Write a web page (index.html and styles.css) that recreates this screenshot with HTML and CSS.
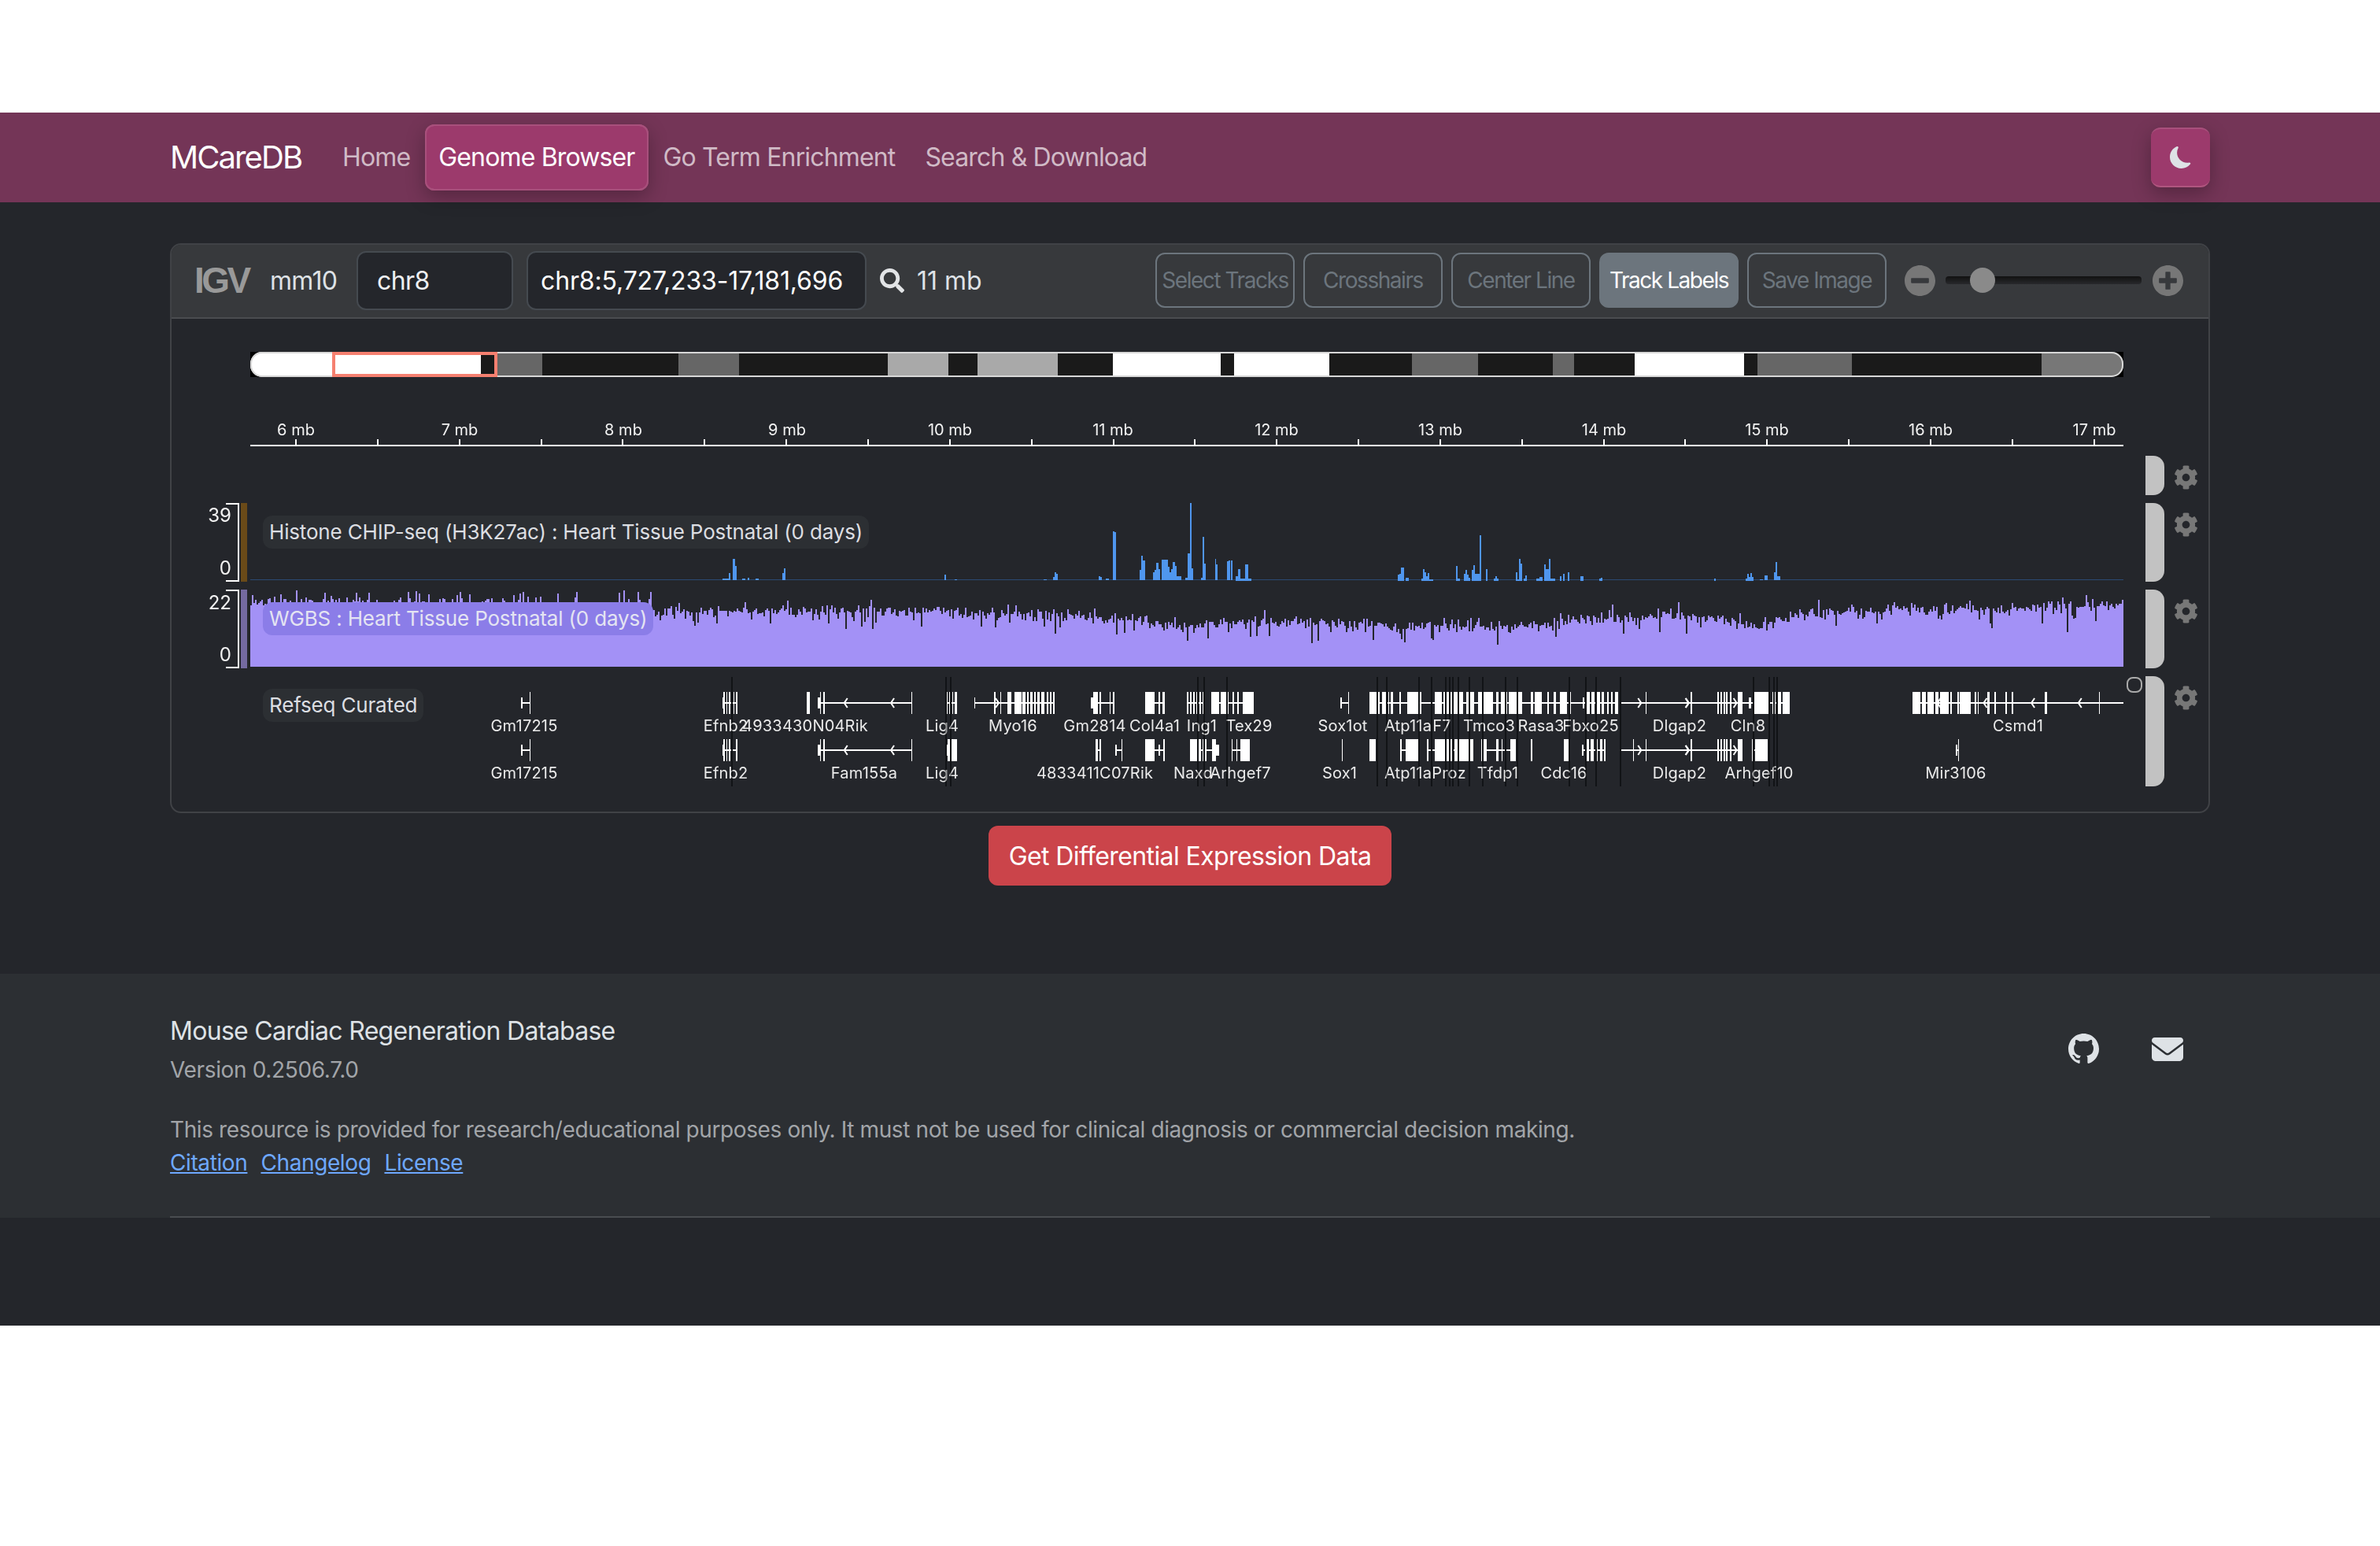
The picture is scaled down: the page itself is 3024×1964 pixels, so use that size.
FILE: index.html
```html
<!DOCTYPE html>
<html lang="en">
<head>
<meta charset="utf-8">
<title>MCareDB</title>
<link rel="stylesheet" href="styles.css">
</head>
<body>
<svg class="sprite" aria-hidden="true"><symbol id="cog" viewBox="0 0 512 512"><path d="M487.4 315.7l-42.6-24.6c4.3-23.2 4.3-47 0-70.2l42.6-24.6c4.9-2.8 7.1-8.6 5.5-14-11.1-35.6-30-67.8-54.7-94.6-3.8-4.1-10-5.1-14.8-2.3L380.8 110c-17.9-15.4-38.5-27.3-60.8-35.1V25.8c0-5.6-3.9-10.5-9.4-11.7-36.7-8.2-74.3-7.8-109.2 0-5.5 1.2-9.4 6.1-9.4 11.7V75c-22.2 7.9-42.8 19.8-60.8 35.1L88.7 85.5c-4.9-2.8-11-1.9-14.8 2.3-24.7 26.7-43.6 58.9-54.7 94.6-1.7 5.4.6 11.2 5.5 14L67.3 221c-4.3 23.2-4.3 47 0 70.2l-42.6 24.6c-4.9 2.8-7.1 8.6-5.5 14 11.1 35.6 30 67.8 54.7 94.6 3.8 4.1 10 5.1 14.8 2.3l42.6-24.6c17.9 15.4 38.5 27.3 60.8 35.1v49.2c0 5.6 3.9 10.5 9.4 11.7 36.7 8.2 74.3 7.8 109.2 0 5.5-1.2 9.4-6.1 9.4-11.7v-49.2c22.2-7.9 42.8-19.8 60.8-35.1l42.6 24.6c4.9 2.8 11 1.9 14.8-2.3 24.7-26.7 43.6-58.9 54.7-94.6 1.5-5.5-.7-11.3-5.6-14.1zM256 336c-44.1 0-80-35.9-80-80s35.9-80 80-80 80 35.9 80 80-35.9 80-80 80z"/></symbol></svg>
<div class="app">
  <nav class="navbar">
    <a class="brand">MCareDB</a>
    <a class="nav-link">Home</a>
    <a class="nav-link active">Genome Browser</a>
    <a class="nav-link">Go Term Enrichment</a>
    <a class="nav-link">Search &amp; Download</a>
    <button class="theme-btn" aria-label="Toggle theme">
      <svg viewBox="0 0 16 16" class="moon"><path d="M6 .278a.77.77 0 0 1 .08.858 7.2 7.2 0 0 0-.878 3.46c0 4.021 3.278 7.277 7.318 7.277q.792-.001 1.533-.16a.79.79 0 0 1 .81.316.73.73 0 0 1-.031.893A8.35 8.35 0 0 1 8.344 16C3.734 16 0 12.286 0 7.71 0 4.266 2.114 1.312 5.124.06A.75.75 0 0 1 6 .278"/></svg>
    </button>
  </nav>

  <section class="igv-card">
    <header class="igv-head">
      <span class="igv-logo">IGV</span>
      <span class="genome">mm10</span>
      <div class="field chrom">chr8</div>
      <div class="field locus">chr8:5,727,233-17,181,696</div>
      <svg class="search" viewBox="0 0 512 512"><path d="M505 442.7L405.3 343c-4.5-4.5-10.6-7-17-7H372c27.6-35.3 44-79.7 44-128C416 93.1 322.9 0 208 0S0 93.1 0 208s93.1 208 208 208c48.3 0 92.7-16.4 128-44v16.3c0 6.4 2.5 12.5 7 17l99.7 99.7c9.4 9.4 24.6 9.4 33.9 0l28.3-28.3c9.4-9.4 9.4-24.6.1-34zM208 336c-70.7 0-128-57.2-128-128 0-70.7 57.2-128 128-128 70.7 0 128 57.2 128 128 0 70.7-57.2 128-128 128z"/></svg>
      <span class="span-size">11 mb</span>
      <div class="tools">
        <button class="tool">Select Tracks</button>
        <button class="tool">Crosshairs</button>
        <button class="tool">Center Line</button>
        <button class="tool on">Track Labels</button>
        <button class="tool">Save Image</button>
      </div>
      <svg class="zoom-icon zoom-out" viewBox="8 8 496 496"><path d="M256 8C119 8 8 119 8 256s111 248 248 248 248-111 248-248S393 8 256 8zM124 296c-6.6 0-12-5.4-12-12v-56c0-6.6 5.4-12 12-12h264c6.6 0 12 5.4 12 12v56c0 6.6-5.4 12-12 12H124z"/></svg>
      <div class="slider"><span class="thumb"></span></div>
      <svg class="zoom-icon zoom-in" viewBox="8 8 496 496"><path d="M256 8C119 8 8 119 8 256s111 248 248 248 248-111 248-248S393 8 256 8zm144 276c0 6.6-5.4 12-12 12h-92v92c0 6.6-5.4 12-12 12h-56c-6.6 0-12-5.4-12-12v-92h-92c-6.6 0-12-5.4-12-12v-56c0-6.6 5.4-12 12-12h92v-92c0-6.6 5.4-12 12-12h56c6.6 0 12 5.4 12 12v92h92c6.6 0 12 5.4 12 12v56z"/></svg>
    </header>

    <div class="igv-body">
      <canvas id="tracks" class="layer" width="2585" height="626"></canvas>

      <span class="tick-label" style="left:157px">6 mb</span>
      <span class="tick-label" style="left:365px">7 mb</span>
      <span class="tick-label" style="left:573px">8 mb</span>
      <span class="tick-label" style="left:781px">9 mb</span>
      <span class="tick-label" style="left:988px">10 mb</span>
      <span class="tick-label" style="left:1195px">11 mb</span>
      <span class="tick-label" style="left:1403px">12 mb</span>
      <span class="tick-label" style="left:1611px">13 mb</span>
      <span class="tick-label" style="left:1819px">14 mb</span>
      <span class="tick-label" style="left:2026px">15 mb</span>
      <span class="tick-label" style="left:2234px">16 mb</span>
      <span class="tick-label" style="left:2442px">17 mb</span>

      <span class="axis axis-a-max">39</span>
      <span class="axis axis-a-min">0</span>
      <span class="bracket bracket-a"></span>
      <span class="color-bar bar-a"></span>
      <span class="axis axis-b-max">22</span>
      <span class="axis axis-b-min">0</span>
      <span class="bracket bracket-b"></span>
      <span class="color-bar bar-b"></span>

      <span class="chip chip-a">Histone CHIP-seq (H3K27ac) : Heart Tissue Postnatal (0 days)</span>
      <span class="chip chip-b">WGBS : Heart Tissue Postnatal (0 days)</span>
      <span class="chip chip-c">Refseq Curated</span>

      <span class="gene r1" style="left:447px">Gm17215</span>
      <span class="gene r1" style="left:703px">Efnb2</span>
      <span class="gene r1" style="left:804px">4933430N04Rik</span>
      <span class="gene r1" style="left:978px">Lig4</span>
      <span class="gene r1" style="left:1068px">Myo16</span>
      <span class="gene r1" style="left:1172px">Gm2814</span>
      <span class="gene r1" style="left:1248px">Col4a1</span>
      <span class="gene r1" style="left:1308px">Ing1</span>
      <span class="gene r1" style="left:1368px">Tex29</span>
      <span class="gene r1" style="left:1487px">Sox1ot</span>
      <span class="gene r1" style="left:1570px">Atp11a</span>
      <span class="gene r1" style="left:1613px">F7</span>
      <span class="gene r1" style="left:1673px">Tmco3</span>
      <span class="gene r1" style="left:1739px">Rasa3</span>
      <span class="gene r1" style="left:1802px">Fbxo25</span>
      <span class="gene r1" style="left:1915px">Dlgap2</span>
      <span class="gene r1" style="left:2002px">Cln8</span>
      <span class="gene r1" style="left:2345px">Csmd1</span>

      <span class="gene r2" style="left:447px">Gm17215</span>
      <span class="gene r2" style="left:703px">Efnb2</span>
      <span class="gene r2" style="left:879px">Fam155a</span>
      <span class="gene r2" style="left:978px">Lig4</span>
      <span class="gene r2" style="left:1172px">4833411C07Rik</span>
      <span class="gene r2" style="left:1297px">Naxd</span>
      <span class="gene r2" style="left:1357px">Arhgef7</span>
      <span class="gene r2" style="left:1483px">Sox1</span>
      <span class="gene r2" style="left:1570px">Atp11a</span>
      <span class="gene r2" style="left:1622px">Proz</span>
      <span class="gene r2" style="left:1684px">Tfdp1</span>
      <span class="gene r2" style="left:1768px">Cdc16</span>
      <span class="gene r2" style="left:1915px">Dlgap2</span>
      <span class="gene r2" style="left:2016px">Arhgef10</span>
      <span class="gene r2" style="left:2266px">Mir3106</span>

      <canvas id="gaps" class="layer" width="2585" height="626"></canvas>

      <span class="handle h-ruler"></span>
      <span class="handle h-a"></span>
      <span class="handle h-b"></span>
      <span class="handle h-c"></span>
      <svg class="gear g-ruler"><use href="#cog"/></svg>
      <svg class="gear g-a"><use href="#cog"/></svg>
      <svg class="gear g-b"><use href="#cog"/></svg>
      <svg class="gear g-c"><use href="#cog"/></svg>
      <span class="scroll-dot"></span>
    </div>
  </section>

  <div class="action"><button class="btn-danger">Get Differential Expression Data</button></div>

  <footer class="footer">
    <div class="footer-inner">
      <div class="footer-row">
        <div>
          <div class="foot-title">Mouse Cardiac Regeneration Database</div>
          <div class="foot-version">Version 0.2506.7.0</div>
        </div>
        <div class="foot-icons">
          <svg class="gh" viewBox="0 0 16 16"><path d="M8 0C3.58 0 0 3.58 0 8c0 3.54 2.29 6.53 5.47 7.59.4.07.55-.17.55-.38 0-.19-.01-.82-.01-1.49-2.01.37-2.53-.49-2.69-.94-.09-.23-.48-.94-.82-1.13-.28-.15-.68-.52-.01-.53.63-.01 1.08.58 1.23.82.72 1.21 1.87.87 2.33.66.07-.52.28-.87.51-1.07-1.78-.2-3.64-.89-3.64-3.95 0-.87.31-1.59.82-2.15-.08-.2-.36-1.02.08-2.12 0 0 .67-.21 2.2.82.64-.18 1.32-.27 2-.27s1.36.09 2 .27c1.53-1.04 2.2-.82 2.2-.82.44 1.1.16 1.92.08 2.12.51.56.82 1.27.82 2.15 0 3.07-1.87 3.75-3.65 3.95.29.25.54.73.54 1.48 0 1.07-.01 1.93-.01 2.2 0 .21.15.46.55.38A8.01 8.01 0 0 0 16 8c0-4.42-3.58-8-8-8"/></svg>
          <svg class="mail" viewBox="0 64 512 384"><path d="M48 64C21.5 64 0 85.5 0 112c0 15.1 7.1 29.3 19.2 38.4L236.8 313.6c11.4 8.5 27 8.5 38.4 0L492.8 150.4c12.1-9.1 19.2-23.3 19.2-38.4c0-26.5-21.5-48-48-48H48zM0 176V384c0 35.3 28.7 64 64 64H448c35.3 0 64-28.7 64-64V176L294.4 339.2c-22.8 17.1-54 17.1-76.8 0L0 176z"/></svg>
        </div>
      </div>
      <p class="foot-note">This resource is provided for research/educational purposes only. It must not be used for clinical diagnosis or commercial decision making.</p>
      <div class="foot-links"><a>Citation</a><a>Changelog</a><a>License</a></div>
      <hr class="foot-rule">
    </div>
  </footer>
</div>
<script src="script.js"></script>
</body>
</html>
```
FILE: styles.css
```css
* { box-sizing: border-box; }
html, body { margin: 0; background: #fff; }
body { padding-top: 143px; font-family: Inter, "Liberation Sans", sans-serif; }
.sprite { display: none; }
.app { background: #24262b; color: #dee2e6; padding-bottom: 137px; }

.navbar { position: relative; z-index: 2; display: flex; align-items: center; height: 114px; padding: 0 216px; background: #743557; }
.brand { width: 168px; margin-right: 32px; padding-bottom: 2px; font-size: 40px; letter-spacing: -1.9px; color: #fff; white-space: nowrap; }
.nav-link { display: flex; align-items: center; height: 84px; padding: 0 19px 2px; border: 2px solid transparent; border-width: 2px 0; font-size: 32px; letter-spacing: -0.85px; color: #d0bac6; white-space: nowrap; }
.nav-link.active { padding: 0 17px 2px; color: #fff; background: #9c3a6c; border-color: #ae5480; border-radius: 12px; box-shadow: 0 8px 24px rgba(0, 0, 0, .28); outline: 2px solid #a8507c; outline-offset: -2px; }
.theme-btn { margin-left: auto; width: 75px; height: 76px; padding: 0; display: flex; align-items: center; justify-content: center; background: #9c3a6c; border: 0; border-bottom: 2px solid #b0567f; border-top: 2px solid #a8507c; border-radius: 12px; box-shadow: 0 8px 24px rgba(0, 0, 0, .28); }
.moon { width: 28px; height: 28px; fill: #dee2e6; }

.igv-card { width: 2592px; height: 724px; margin: 52px 0 0 216px; border: 2px solid #404246; border-radius: 14px; overflow: hidden; }
.igv-head { display: flex; align-items: center; height: 94px; padding: 0 32px 2px 29px; background: #37393c; border-bottom: 2px solid #4a4c50; }
.igv-logo { width: 70px; margin-right: 26px; font-family: "Liberation Sans", sans-serif; font-weight: 700; font-size: 46px; letter-spacing: -3.5px; color: #999; line-height: 1; white-space: nowrap; }
.genome { width: 85px; margin-right: 25px; font-size: 32px; letter-spacing: -0.7px; color: #dee2e6; }
.field { display: flex; align-items: center; height: 75px; background: #24262b; border: 2px solid #454a50; border-radius: 12px; font-size: 32px; letter-spacing: -0.6px; color: #eef0f2; white-space: nowrap; }
.chrom { width: 199px; margin-right: 17px; padding-left: 24px; }
.locus { width: 432px; margin-right: 16px; padding-left: 16px; letter-spacing: -0.14px; color: #fff; }
.search { width: 33px; height: 31px; margin-right: 15px; fill: #e2e4e6; }
.span-size { font-size: 32px; letter-spacing: 0; color: #dee2e6; white-space: nowrap; }
.tools { display: flex; gap: 11px; margin-left: auto; margin-right: 23px; }
.tool { width: 177px; height: 70px; padding: 0; background: transparent; border: 2px solid #6c757d; border-radius: 12px; font: 28px Inter, "Liberation Sans", sans-serif; letter-spacing: -1.45px; color: #6c757d; white-space: nowrap; }
.tool.on { background: #6c757d; color: #fff; }
.zoom-icon { width: 39px; height: 39px; fill: #777; flex: none; }
.zoom-out { margin-right: 13px; }
.zoom-in { margin-left: 14px; }
.slider { position: relative; width: 249px; height: 10px; border-radius: 4px; background: linear-gradient(#111, #28292c); }
.thumb { position: absolute; left: 31px; top: -11px; width: 32px; height: 32px; border-radius: 50%; background: #8a8a8a; }

.igv-body { position: relative; height: 626px; margin-left: 1px; }
.layer { position: absolute; left: 0; top: 0; pointer-events: none; }
.tick-label { position: absolute; top: 129px; transform: translateX(-50%); font-size: 20px; line-height: 24px; color: #f2f2f2; white-space: nowrap; }
.gene { position: absolute; transform: translateX(-50%); font-size: 20px; line-height: 24px; letter-spacing: .2px; color: #eaeaea; white-space: nowrap; }
.r1 { top: 505px; }
.r2 { top: 565px; }
.axis { position: absolute; left: 25px; width: 50px; text-align: right; font-size: 24px; line-height: 30px; color: #f2f2f2; }
.axis-a-max { top: 235px; }
.axis-a-min { top: 302px; }
.axis-b-max { top: 346px; }
.axis-b-min { top: 412px; }
.bracket { position: absolute; left: 68px; width: 17px; height: 100px; border: 2px solid #fff; border-left: 0; }
.bracket-a { top: 234px; }
.bracket-b { top: 344px; }
.color-bar { position: absolute; left: 87px; width: 8px; height: 100px; }
.bar-a { top: 234px; background: #6a4a18; }
.bar-b { top: 344px; background: #746aa0; }
.chip { position: absolute; left: 115px; height: 42px; padding: 0 8px; border-radius: 12px; font-size: 26px; line-height: 42px; letter-spacing: -.17px; color: #dcdee2; background: #2c2f33; white-space: nowrap; }
.chip-a { top: 250px; }
.chip-b { top: 360px; background: #8b7de8; color: #e4e4f2; }
.chip-c { top: 470px; }
.handle { position: absolute; left: 2507px; width: 24px; background: #c2c2c2; border-radius: 0 14px 14px 0; }
.h-ruler { top: 174px; height: 50px; }
.h-a { top: 234px; height: 100px; }
.h-b { top: 344px; height: 100px; }
.h-c { top: 454px; height: 140px; }
.gear { position: absolute; left: 2543px; width: 31px; height: 31px; fill: #777; }
.g-ruler { top: 186px; }
.g-a { top: 246px; }
.g-b { top: 356px; }
.g-c { top: 466px; }
.scroll-dot { position: absolute; left: 2483px; top: 455px; width: 20px; height: 20px; border: 2px solid #aaa; border-radius: 8px; }

.action { display: flex; justify-content: center; margin-top: 16px; }
.btn-danger { width: 512px; height: 76px; padding: 0; background: #cb444a; border: 0; border-radius: 12px; font: 32px Inter, "Liberation Sans", sans-serif; letter-spacing: -0.6px; color: #fff; white-space: nowrap; }

.footer { margin-top: 112px; background: #2c2f33; }
.footer-inner { margin: 0 216px; padding-top: 49px; }
.footer-row { display: flex; justify-content: space-between; align-items: flex-start; }
.foot-title { font-size: 32px; line-height: 48px; letter-spacing: -0.7px; color: #dee2e6; }
.foot-version { margin-top: 4px; font-size: 28px; line-height: 42px; letter-spacing: -0.35px; color: #a2a5a9; }
.foot-icons { display: flex; align-items: center; gap: 67px; margin-top: 27px; padding-right: 34px; }
.gh { width: 39px; height: 39px; fill: #dee2e6; }
.mail { width: 40px; height: 30px; fill: #dee2e6; }
.foot-note { margin: 34px 0 0; font-size: 28px; line-height: 42px; letter-spacing: -0.39px; color: #a2a5a9; white-space: nowrap; }
.foot-links { display: flex; gap: 17px; font-size: 28px; line-height: 42px; letter-spacing: -0.39px; }
.foot-links a { color: #6ea8fe; text-decoration: underline; }
.foot-rule { height: 2px; margin: 47px 0 0; border: 0; background: #4a4d51; }
```
FILE: script.js
```js
(function () {
  var ctx = document.getElementById('tracks').getContext('2d');
  var over = document.getElementById('gaps').getContext('2d');
  ctx.translate(-219, -405);
  over.translate(-219, -405);

  function rect(c, x0, y, x1, h, color) { c.fillStyle = color; c.fillRect(Math.round(x0), y, Math.max(1, Math.round(x1) - Math.round(x0)), h); }

  /* ideogram */
  var W = '#ffffff', K = '#1a1a1a', G = '#666666', L = '#a9a9a9';
  var bands = [[164, 317, W], [317, 327, K], [327, 357, G], [357, 447, K], [447, 487, G], [487, 585, K], [585, 625, L], [625, 644, K], [644, 697, L], [697, 733, K], [733, 804, W], [804, 813, K], [813, 876, W], [876, 930, K], [930, 974, G], [974, 1023, K], [1023, 1037, G], [1037, 1077, K], [1077, 1149, W], [1149, 1158, K], [1158, 1220, G], [1220, 1345, K], [1345, 1399, '#777777']];
  var S = 3024 / 1568;
  ctx.fillStyle = '#000';
  ctx.fillRect(318, 447, 14, 32);
  ctx.fillRect(2684, 447, 14, 32);
  ctx.save();
  ctx.beginPath();
  ctx.roundRect(318, 447, 2380, 32, 15);
  ctx.clip();
  bands.forEach(function (b) { rect(ctx, b[0] * S, 447, b[1] * S, 32, b[2]); });
  ctx.restore();
  ctx.strokeStyle = '#d8d8d8';
  ctx.lineWidth = 2;
  ctx.beginPath();
  ctx.roundRect(319, 448, 2378, 30, 14);
  ctx.stroke();
  ctx.strokeStyle = '#f58070';
  ctx.lineWidth = 4;
  ctx.strokeRect(424, 449, 206, 28);

  /* ruler */
  rect(ctx, 318, 565, 2698, 2, '#fff');
  for (var t = 0; t < 24; t++) {
    var tx = 375 + t * 103.85;
    if (tx < 2698) rect(ctx, tx, 558, tx + 2, 8, '#fff');
  }

  /* histone peaks: [z0, z1, ztop] in crop coordinates */
  var BLUE = '#4f96ee';
  rect(ctx, 318, 736, 2698, 1, '#2b4a73');
  function peaks(ox, f, oy, zbase, list) {
    list.forEach(function (p) {
      var top = Math.round(oy + p[2] / 3), base = Math.round(oy + zbase / 3) + 1;
      rect(ctx, ox + p[0] / f, top, ox + p[1] / f, base - top, BLUE);
    });
  }
  peaks(880, 2.24, 620, 349, [[85, 103, 346], [103, 107, 325], [115, 120, 270], [120, 125, 297], [140, 150, 346], [157, 161, 342], [180, 188, 344], [255, 259, 325], [259, 264, 305], [716, 721, 330], [745, 752, 348], [1000, 1008, 347], [1026, 1031, 340], [1031, 1035, 320], [1035, 1040, 328], [1155, 1160, 335], [1160, 1165, 340], [1175, 1185, 344], [1196, 1200, 165], [1200, 1205, 168], [1272, 1277, 312], [1277, 1282, 258], [1282, 1287, 276], [1310, 1315, 322], [1315, 1320, 312], [1320, 1325, 284], [1325, 1330, 310], [1335, 1352, 272], [1352, 1357, 300], [1357, 1362, 320], [1362, 1367, 308], [1367, 1372, 282], [1372, 1377, 298], [1377, 1390, 335], [1402, 1410, 342], [1410, 1415, 248], [1415, 1420, 57], [1420, 1424, 305], [1448, 1452, 342], [1452, 1456, 186], [1456, 1460, 288], [1487, 1490, 270], [1490, 1495, 292], [1520, 1525, 280], [1525, 1530, 277], [1532, 1537, 277]]);
  peaks(1570, 2.376, 630, 320, [[0, 8, 305], [8, 14, 280], [14, 29, 315], [29, 38, 260], [38, 48, 316], [489, 495, 300], [495, 499, 297], [499, 508, 274], [513, 523, 312], [561, 565, 315], [565, 570, 278], [570, 575, 290], [575, 579, 305], [579, 584, 294], [584, 596, 318], [665, 670, 267], [670, 678, 316], [689, 694, 296], [694, 699, 281], [699, 703, 300], [703, 708, 312], [713, 717, 283], [717, 722, 265], [722, 736, 298], [736, 741, 151], [755, 760, 280], [779, 784, 314], [784, 789, 306], [789, 794, 314], [846, 851, 290], [851, 855, 318], [855, 860, 241], [860, 865, 257], [870, 874, 316], [874, 879, 304], [907, 917, 315], [917, 927, 309], [931, 936, 262], [936, 946, 280], [946, 951, 241], [951, 965, 315], [979, 984, 306], [988, 993, 296], [1003, 1007, 292], [1041, 1050, 307], [1098, 1103, 316], [1103, 1108, 312], [1444, 1449, 316], [1539, 1544, 316], [1544, 1549, 298], [1549, 1554, 310], [1554, 1558, 294], [1558, 1563, 308]]);
  peaks(2100, 2.178, 560, 529, [[170, 174, 526], [297, 305, 527], [310, 318, 512], [335, 340, 500], [340, 344, 463], [344, 352, 515]]);

  /* WGBS wiggle */
  var seed = 20506;
  function rnd() { seed = (seed + 0x6D2B79F5) | 0; var q = Math.imul(seed ^ (seed >>> 15), 1 | seed); q = (q + Math.imul(q ^ (q >>> 7), 61 | q)) ^ q; return ((q ^ (q >>> 14)) >>> 0) / 4294967296; }
  var env = [[318, 767], [600, 767], [830, 778], [880, 776], [1100, 775], [1250, 780], [1350, 782], [1415, 787], [1505, 796], [1580, 792], [1696, 790], [1801, 798], [1831, 795], [1928, 797], [1991, 790], [2054, 784], [2117, 781], [2180, 785], [2228, 797], [2284, 781], [2350, 778], [2421, 775], [2559, 774], [2640, 770], [2698, 768]];
  function envelope(x) {
    for (var i = 1; i < env.length; i++) if (x <= env[i][0]) {
      var a = env[i - 1], b = env[i];
      return a[1] + (b[1] - a[1]) * (x - a[0]) / (b[0] - a[0]);
    }
    return 768;
  }
  var PURPLE = '#a391f6';
  for (var x = 318; x < 2698; x += 2) {
    var y = envelope(x) + (rnd() + rnd() - 1) * 9;
    var r = rnd();
    if (x < 830) {
      if (r < 0.16) y = 750 + rnd() * 13;
    } else if (r < 0.05) y -= 5 + rnd() * 7;
    else if (r < 0.13) y += 6 + rnd() * 12;
    else if (r < 0.145) y += 16 + rnd() * 14;
    y = Math.round(y);
    rect(ctx, x, y, x + 2, 847 - y, PURPLE);
  }

  /* genes */
  var ROW = [879, 939];
  function gene(ox, f, row, spec) {
    var y0 = ROW[row], yc = y0 + 14;
    function X(z) { return ox + z / f; }
    (spec.l || []).forEach(function (s) { rect(ctx, X(s[0]), yc - 1, X(s[1]), 2, '#fff'); });
    (spec.s || []).forEach(function (s) { rect(ctx, X(s[0]), yc - 7, X(s[1]), 14, '#fff'); });
    (spec.e || []).forEach(function (s) { rect(ctx, X(s[0]), y0, X(s[1]), 28, '#fff'); });
    ctx.strokeStyle = '#fff';
    ctx.lineWidth = 2;
    (spec.a || []).forEach(function (z) {
      var d = z < 0 ? -1 : 1, ax = X(Math.abs(z));
      ctx.beginPath();
      ctx.moveTo(ax - d * 3, yc - 6);
      ctx.lineTo(ax + d * 1, yc);
      ctx.lineTo(ax - d * 3, yc + 6);
      ctx.stroke();
    });
  }
  var common5 = { l: [[727, 741]], s: [[724, 728]], e: [[741, 743]] };
  gene(200, 1.568, 0, common5);
  gene(200, 1.568, 1, common5);
  gene(200, 1.568, 0, { l: [[1126, 1155]], s: [[1126, 1128]], e: [[1128, 1131], [1134, 1136], [1139, 1141], [1147, 1150], [1152, 1155]] });
  gene(200, 1.568, 1, { l: [[1126, 1155]], s: [[1126, 1128]], e: [[1128, 1131], [1134, 1136], [1139, 1141], [1152, 1155]] });
  gene(200, 1.568, 0, { l: [[1318, 1503]], s: [[1316, 1320]], e: [[1293, 1300], [1320, 1322], [1327, 1330], [1502, 1504]], a: [-1370, -1463] });
  gene(200, 1.568, 1, { l: [[1318, 1503]], s: [[1316, 1320]], e: [[1320, 1322], [1327, 1330], [1502, 1504]], a: [-1370, -1463] });

  gene(1150, 1.568, 0, { s: [[80, 82]], l: [[80, 103]], e: [[82, 85], [88, 92], [94, 96], [98, 103]] });
  gene(1150, 1.568, 0, { l: [[139, 298]], s: [[138, 140]], e: [[177, 180], [190, 192], [204, 212], [218, 232], [234, 240], [243, 246], [250, 254], [257, 260], [264, 268], [272, 278], [282, 285], [288, 291], [295, 298]], a: [185] });
  gene(1150, 1.568, 0, { l: [[370, 417]], s: [[370, 375]], e: [[375, 384], [388, 391], [408, 410], [414, 417]] });
  gene(1150, 1.568, 0, { l: [[478, 517]], e: [[478, 497], [505, 508], [513, 517]] });
  gene(1150, 1.568, 0, { l: [[562, 598]], e: [[562, 565], [568, 571], [574, 577], [580, 583], [586, 589], [592, 598]] });
  gene(1150, 1.568, 0, { l: [[610, 695]], e: [[610, 625], [628, 645], [652, 655], [662, 665], [672, 695]] });
  gene(1150, 1.568, 0, { l: [[867, 884]], s: [[867, 870]], e: [[882, 884]] });
  gene(1150, 1.568, 0, { l: [[925, 1420]], s: [[1350, 1353]], e: [[925, 945], [950, 958], [962, 965], [968, 972], [985, 988], [1000, 1028], [1055, 1070], [1072, 1100], [1103, 1112], [1118, 1133], [1142, 1172], [1178, 1182], [1187, 1200], [1203, 1229], [1246, 1252], [1255, 1268], [1280, 1283], [1292, 1297], [1305, 1318], [1322, 1327], [1358, 1364], [1368, 1373], [1378, 1384], [1388, 1393], [1398, 1402], [1406, 1410], [1415, 1420]] });
  gene(1150, 1.568, 0, { l: [[1425, 1568]], e: [[1475, 1477]], a: [1465, 1560] });

  gene(1150, 1.568, 1, { s: [[80, 84]], l: [[80, 103]], e: [[84, 103]] });
  gene(1150, 1.568, 1, { l: [[380, 391]], e: [[380, 384], [387, 391]] });
  gene(1150, 1.568, 1, { l: [[418, 433]], s: [[418, 422]], e: [[431, 433]] });
  gene(1150, 1.568, 1, { l: [[478, 517]], s: [[505, 508]], e: [[478, 497], [515, 517]] });
  gene(1150, 1.568, 1, { l: [[568, 625]], e: [[568, 590], [593, 600], [612, 620]], s: [[620, 625]] });
  gene(1150, 1.568, 1, { l: [[650, 687]], e: [[650, 653], [660, 662], [668, 687]] });
  gene(1150, 1.568, 1, { e: [[870, 872]] });
  gene(1150, 1.568, 1, { l: [[925, 938]], e: [[925, 938]] });
  gene(1150, 1.568, 1, { l: [[986, 1024]], e: [[986, 989], [998, 1024]] });
  gene(1150, 1.568, 1, { l: [[1040, 1132]], e: [[1040, 1043], [1055, 1090], [1095, 1100], [1103, 1132]] });
  gene(1150, 1.568, 1, { l: [[1148, 1216]], e: [[1148, 1158], [1178, 1183], [1188, 1190], [1206, 1216]] });
  gene(1150, 1.568, 1, { e: [[1246, 1250], [1312, 1322]] });
  gene(1150, 1.568, 1, { l: [[1348, 1396]], s: [[1348, 1352]], e: [[1357, 1362], [1366, 1372], [1376, 1380], [1384, 1390], [1392, 1396]] });
  gene(1150, 1.568, 1, { l: [[1423, 1568]], e: [[1423, 1425], [1450, 1452], [1475, 1477]], a: [1465, 1560] });

  var dlgap = { l: [[0, 235]], e: [[105, 108], [178, 183], [188, 192], [196, 200], [203, 207], [213, 217], [235, 248]], a: [97, 230] };
  gene(2100, 2.178, 0, dlgap);
  gene(2100, 2.178, 1, dlgap);
  gene(2100, 2.178, 0, { l: [[248, 378]], s: [[265, 272]], e: [[282, 320], [330, 340], [345, 355], [360, 378]] });
  gene(2100, 2.178, 0, { l: [[719, 1302]], e: [[719, 740], [745, 755], [760, 778], [782, 790], [795, 818], [823, 827], [843, 847], [850, 880], [890, 895], [899, 902], [925, 932], [946, 950], [976, 980], [993, 997], [1085, 1092], [1234, 1237]], a: [-1050, -1180, -790, -918] });
  gene(2100, 2.178, 1, { l: [[274, 318]], e: [[274, 278], [283, 318]] });
  gene(2100, 2.178, 1, { l: [[838, 847]], s: [[838, 842]], e: [[846, 848]] });

  /* dark gaps: solid over the gene glyphs, faint over the gene names */
  function gaps(ox, f, list) {
    list.forEach(function (z) {
      rect(ctx, ox + z / f, 860, ox + z / f + 2, 139, '#121316');
      rect(over, ox + z / f, 860, ox + z / f + 2, 139, 'rgba(18, 19, 22, .4)');
    });
  }
  gaps(200, 1.568, [1143]);
  gaps(1150, 1.568, [80, 90, 582, 595, 640, 940, 958, 1023, 1048, 1075, 1083, 1090, 1100, 1122, 1150, 1195, 1218, 1322, 1355, 1375, 1423]);
  gaps(2100, 2.178, [277, 320, 333, 342]);
})();
```
